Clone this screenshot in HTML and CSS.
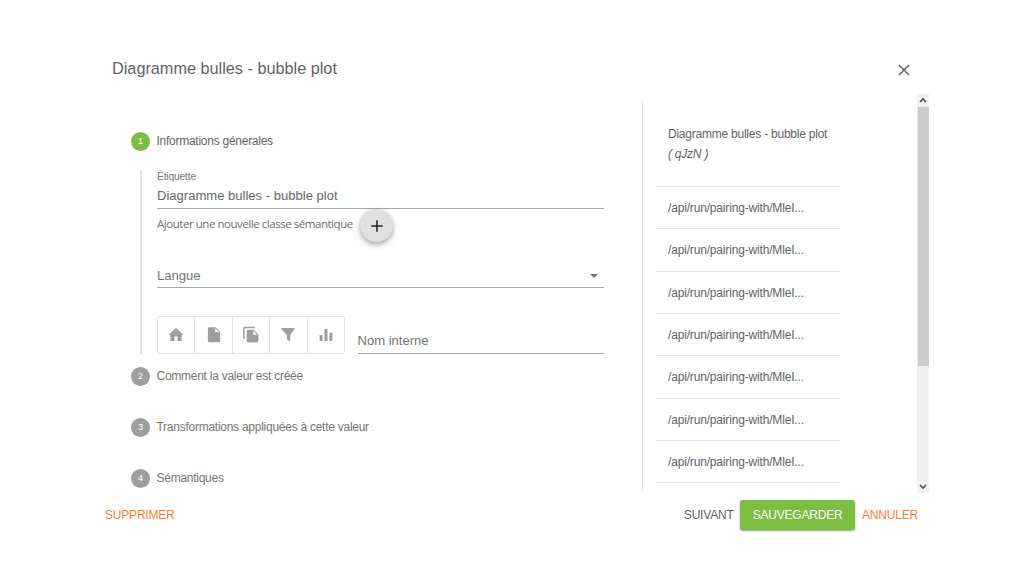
FILE: index.html
```html
<!DOCTYPE html>
<html lang="fr">
<head>
<meta charset="utf-8">
<title>Diagramme bulles - bubble plot</title>
<link rel="stylesheet" href="styles.css">
</head>
<body>
<div class="dialog">
  <header class="dialog-header">
    <h1 class="dialog-title">Diagramme bulles - bubble plot</h1>
    <button class="close" aria-label="Fermer"><svg viewBox="0 0 12 12"><path d="M1 1l10 10M11 1L1 11"/></svg></button>
  </header>
  <main class="content">
    <section class="stepper">
      <div class="step step-active"><span class="badge">1</span><span class="step-label">Informations génerales</span></div>
      <div class="step-body">
        <label class="caption">Étiquette</label>
        <div class="field field-label">Diagramme bulles - bubble plot</div>
        <div class="add-row">
          <span class="add-text">Ajouter une nouvelle classe sémantique</span>
          <button class="fab" aria-label="Ajouter"><svg viewBox="0 0 12 12"><path d="M6 .3v11.4M.3 6h11.4"/></svg></button>
        </div>
        <div class="field field-select"><span>Langue</span><span class="caret"></span></div>
        <div class="tools-row">
          <div class="tools">
            <span class="tool"><svg viewBox="0 0 24 24"><path d="M10 20v-6h4v6h5.500v-8H22L12 2.500 2 12h2.500v8z"/></svg></span>
            <span class="tool"><svg viewBox="0 0 24 24"><path d="M6 1.500c-1.300 0-2.200.9-2.200 2.200v15.600c0 1.300.9 2.200 2.200 2.200h12c1.300 0 2.200-.9 2.200-2.200V7.500l-6-6H6zm7.500 6.500V3L19 8h-5.500z"/></svg></span>
            <span class="tool"><svg viewBox="0 0 24 24"><path d="M17 1H4c-1.300 0-2.500 1-2.500 2.300V17h2V3H17V1zm-1.500 4H8.500c-1.300 0-2.300.9-2.300 2.200v12.600c0 1.300 1 2.200 2.300 2.200h11c1.300 0 2.300-.9 2.300-2.200V11l-6.300-6zm-.5 6.500V6.500l5.200 5H15z"/></svg></span>
            <span class="tool"><svg viewBox="0 0 24 24"><path d="M3.500 2.500h17v2L15 12v8.500l-4.500-3V12l-7-7.500z"/></svg></span>
            <span class="tool"><svg viewBox="0 0 24 24"><path d="M10 20h4V4h-4v16zm-6.500 0h4v-8h-4v8zM16.500 9v11h4V9h-4z"/></svg></span>
          </div>
          <div class="field field-internal">Nom interne</div>
        </div>
      </div>
      <div class="step"><span class="badge">2</span><span class="step-label">Comment la valeur est créée</span></div>
      <div class="step step-spaced"><span class="badge">3</span><span class="step-label">Transformations appliquées à cette valeur</span></div>
      <div class="step step-spaced"><span class="badge">4</span><span class="step-label">Sémantiques</span></div>
    </section>
    <aside class="preview">
      <div class="preview-head"><div>Diagramme bulles - bubble plot</div><em>( qJzN )</em></div>
      <ul class="values">
        <li>/api/run/pairing-with/MleI...</li>
        <li>/api/run/pairing-with/MleI...</li>
        <li>/api/run/pairing-with/MleI...</li>
        <li>/api/run/pairing-with/MleI...</li>
        <li>/api/run/pairing-with/MleI...</li>
        <li>/api/run/pairing-with/MleI...</li>
        <li>/api/run/pairing-with/MleI...</li>
        <li></li>
      </ul>
    </aside>
    <div class="scrollbar">
      <svg class="arrow" viewBox="0 0 8 6"><path d="M1 5l3-3 3 3"/></svg>
      <div class="thumb"></div>
      <svg class="arrow arrow-down" viewBox="0 0 8 6"><path d="M1 1l3 3 3-3"/></svg>
    </div>
  </main>
  <footer class="actions">
    <button class="btn btn-warn">SUPPRIMER</button>
    <span class="spacer"></span>
    <button class="btn btn-next">SUIVANT</button>
    <button class="btn btn-save">SAUVEGARDER</button>
    <button class="btn btn-warn btn-cancel">ANNULER</button>
  </footer>
</div>
</body>
</html>
```
FILE: styles.css
```css
* { box-sizing: border-box; }
body {
  margin: 0;
  background: #fff;
  color: #5f6368;
  font-family: "Liberation Sans", Arial, sans-serif;
  font-size: 12px;
}
button { border: 0; padding: 0; background: none; font: inherit; color: inherit; }
.dialog { width: 824px; height: 576px; margin-left: 105px; padding-top: 56px; display: flex; flex-direction: column; }
.dialog-header { height: 38px; flex: none; padding: 0 19px 0 7px; display: flex; justify-content: space-between; align-items: flex-start; }
.dialog-title { margin: 0; font-size: 16.25px; line-height: 24px; font-weight: 400; }
.close { width: 12px; height: 12px; margin-top: 8px; }
.close svg, .fab svg { display: block; width: 12px; height: 12px; fill: none; stroke: #5f6368; stroke-width: 1.5; }
.content { height: 399px; flex: none; display: flex; overflow: hidden; }
.stepper { width: 537px; padding: 37px 38px 0 26px; flex: none; }
.step { display: flex; align-items: center; height: 20px; color: #757575; }
.step-label { letter-spacing: -.26px; }
.step-active { color: #666; }
.step-spaced { margin-top: 31px; }
.badge { width: 19px; height: 19px; margin-right: 6.5px; border-radius: 50%; background: #9e9e9e; color: #fff; font-size: 9px; line-height: 19px; text-align: center; }
.step-active .badge { background: #7cbd42; }
.step-body { height: 184px; margin: 19px 0 12px 9px; padding-left: 15px; border-left: 2px solid #e3e3e3; }
.caption { display: block; height: 13px; line-height: 13px; font-size: 10.3px; letter-spacing: -.18px; color: #777; }
.field { border-bottom: 1px solid #a8a8a8; font-size: 13.05px; color: #757575; }
.field-label { height: 26px; line-height: 26px; color: #666; }
.add-row { height: 49px; display: flex; align-items: flex-start; }
.add-text { width: 203px; font-family: "Open Sans", "Noto Sans", sans-serif; font-size: 11.5px; line-height: 30px; letter-spacing: -.46px; white-space: nowrap; color: #6b7075; }
.fab { width: 33px; height: 33px; border-radius: 50%; background: #e0e0e0; display: flex; align-items: center; justify-content: center; box-shadow: 0 2px 4px rgba(0,0,0,.25), 0 4px 9px rgba(0,0,0,.13); }
.fab svg { stroke: #222; }
.field-select { height: 30px; line-height: 36px; display: flex; justify-content: space-between; }
.caret { width: 8px; height: 4px; margin: 16px 6px 0 0; background: #757575; clip-path: polygon(0 0, 100% 0, 50% 100%); }
.tools-row { display: flex; margin-top: 28px; }
.tools { width: 188px; height: 38px; border: 1px solid #e3e3e3; border-radius: 3px; display: flex; }
.tool { flex: 1; display: flex; align-items: center; justify-content: center; }
.tool + .tool { border-left: 1px solid #e3e3e3; }
.tool svg { width: 18px; height: 18px; fill: #9e9e9e; }
.field-internal { flex: 1; height: 38px; margin-left: 12.5px; line-height: 50px; }
.preview { width: 275px; padding-left: 13px; flex: none; border-left: 1px solid #e8e8e8; margin-top: 5px; font-size: 12px; letter-spacing: -.23px; }
.preview-head { height: 87px; padding: 25px 0 0 12px; line-height: 20px; color: #5f6368; }
.values { width: 184px; list-style: none; margin: 0; padding: 0; }
.values li { height: 42.35px; border-top: 1px solid #e6e6e6; padding-left: 12px; line-height: 43px; letter-spacing: -.17px; color: #5f6368; }
.scrollbar { width: 12px; background: #f0f0f0; display: flex; flex-direction: column; align-items: center; }
.arrow { width: 8px; height: 6px; flex: none; margin: 3px 0 4px; fill: none; stroke: #505050; stroke-width: 1.6; }
.thumb { width: 11px; height: 259px; background: #cdcdcd; }
.arrow-down { margin: auto 0 3px; }
.actions { display: flex; align-items: center; height: 43px; }
.spacer { flex: 1; }
.btn { font-size: 12.5px; letter-spacing: -.55px; white-space: nowrap; }
.btn { font-size: 12px; letter-spacing: -.2px; }
.btn-warn { color: #f58233; }
.btn-next { margin-right: 6.5px; }
.btn-save { width: 115px; height: 30px; margin-right: 7px; border-radius: 3px; background: #7cbd42; color: #fff; box-shadow: 0 1px 2px rgba(0,0,0,.4); }
.btn-cancel { margin-right: 11px; }
```
